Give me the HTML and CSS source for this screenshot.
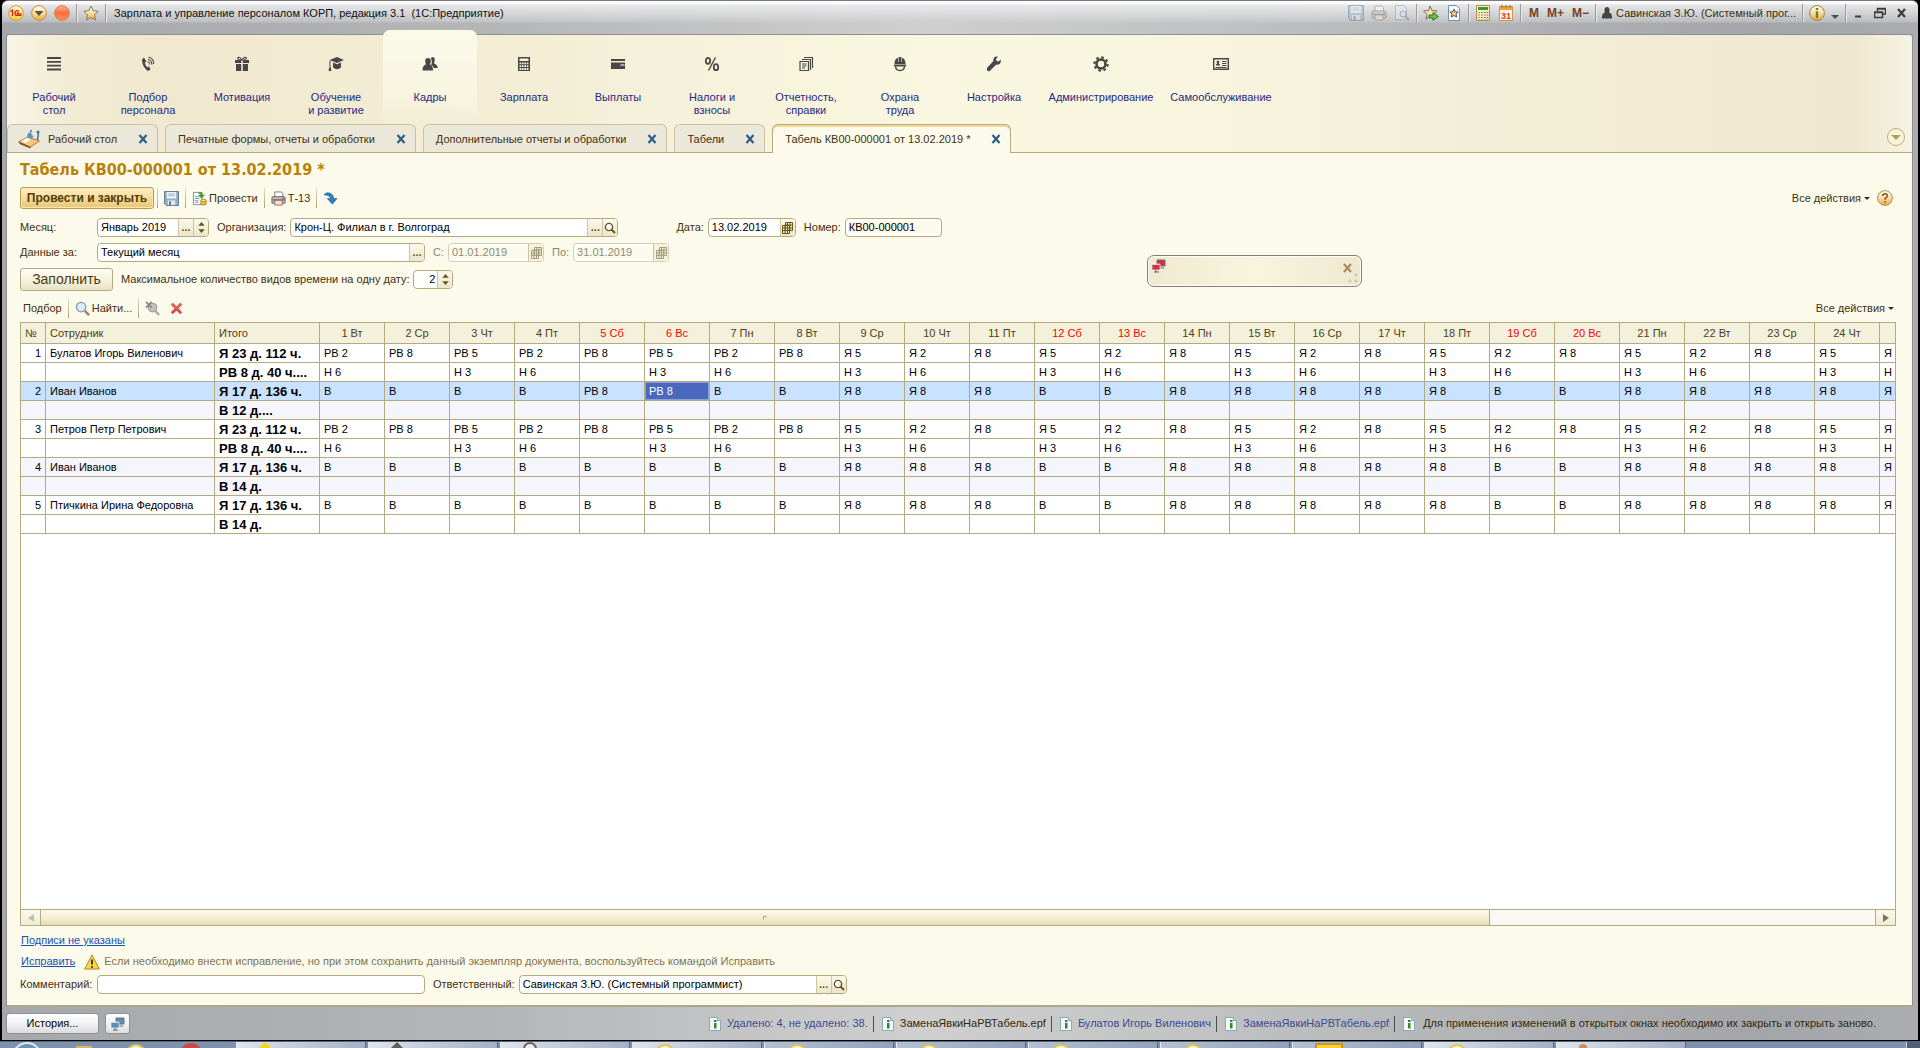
FILE: index.html
```html
<!DOCTYPE html>
<html lang="ru">
<head>
<meta charset="utf-8">
<title>Зарплата и управление персоналом КОРП, редакция 3.1</title>
<link rel="stylesheet" href="styles.css">
</head>
<body>
<svg class="defs" aria-hidden="true">
  <defs>
    <linearGradient id="g-orange" x2="0" y2="1"><stop offset="0" stop-color="#fffdf2"/><stop offset=".45" stop-color="#fbe3ae"/><stop offset="1" stop-color="#f0a63c"/></linearGradient>
    <linearGradient id="g-yellow" x2="0" y2="1"><stop offset="0" stop-color="#fffbd8"/><stop offset="1" stop-color="#f8d22c"/></linearGradient>
    <linearGradient id="g-red" x2="0" y2="1"><stop offset="0" stop-color="#ffb595"/><stop offset=".5" stop-color="#fb6a3f"/><stop offset="1" stop-color="#ff9a5c"/></linearGradient>
  </defs>
  <symbol id="i-close" viewBox="0 0 10 10"><path d="M1.500 1l7 8M8.500 1l-7 8" stroke="currentColor" stroke-width="2.200"/></symbol>
  <symbol id="i-lens" viewBox="0 0 12 12"><circle cx="5" cy="5" r="3.600" fill="#fff" stroke="#6b5413" stroke-width="1.400"/><path d="M7.500 7.500L11 11" stroke="#6b5413" stroke-width="2"/></symbol>
  <symbol id="i-cal" viewBox="0 0 11 12"><path d="M3.500.5h7v8h-7z" fill="#f7f3d8" stroke="currentColor"/><path d="M.5 3.500h7v8h-7zM.5 6h9.500M.5 8.500h9M3 2.500v9M5.500 1v10.500M8 1v8M3.500 3h7" fill="none" stroke="currentColor"/></symbol>
  <symbol id="i-spin" viewBox="0 0 7 12"><path d="M3.500 0L7 4H0zM3.500 12L0 8h7z" fill="currentColor"/></symbol>
  <symbol id="i-save" viewBox="0 0 16 16"><path d="M.5.5h15v15h-13l-2-2z" fill="#8fb0c6" stroke="#56748b"/><path d="M3 1h10v7H3z" fill="#eef4f8"/><path d="M4.500 3h7M4.500 5h7" stroke="#9db2c0"/><path d="M4 10h8v5H4z" fill="#dfe7ec"/><path d="M5.500 11h2v4h-2z" fill="#56748b"/></symbol>
  <symbol id="i-print" viewBox="0 0 16 16"><path d="M4 1h7l1.500 1.500V7H4z" fill="#fff" stroke="#777"/><path d="M1 7q0-1 1-1h12q1 0 1 1v6H1z" fill="#bdbdbd" stroke="#666"/><path d="M1.500 9.500h13" stroke="#555"/><path d="M4 10h8v5H4z" fill="#f3e2da" stroke="#a06a5a"/><circle cx="13" cy="8" r=".8" fill="#d22"/></symbol>
  <symbol id="i-mon" viewBox="0 0 15 14"><path d="M6 1h8v6H6z" fill="currentColor" stroke="#66717c"/><path d="M8 9h5" stroke="#66717c"/><path d="M1 5h8v6H1z" fill="currentColor" stroke="#fff" stroke-width=".6"/><path d="M1 5.500h8" stroke="#cfd8df"/><path d="M3 13h5M5 11v2" stroke="#59636d"/></symbol>
  <symbol id="i-info" viewBox="0 0 12 14"><path d="M.5.5h8l3 3v10H.5z" fill="#f4f9fd" stroke="#8ea6b8"/><path d="M8.500.5v3h3" fill="#c9d9e4" stroke="#8ea6b8"/><path d="M5 3h2.500v2H5zM5 6h2.500v5.500H5z" fill="#2f8a22"/></symbol>
</svg>

<div class="window">
  <header class="titlebar">
    <div class="title-left">
      <button class="orb" aria-label="1С"><svg viewBox="0 0 16 16"><circle cx="8" cy="8" r="7.300" fill="url(#g-yellow)" stroke="#d6993d"/><path d="M2.500 6.500L4.500 5v6M11 6.200Q9 4.800 7.500 6.500T8 10.300h5.500M10.500 7.800Q9 7.500 9.300 8.800H13.500" fill="none" stroke="#d8261c" stroke-width="1.300"/></svg></button>
      <button class="orb" aria-label="Главное меню"><svg viewBox="0 0 16 16"><circle cx="8" cy="8" r="7.300" fill="url(#g-orange)" stroke="#c98a35"/><path d="M3.500 6h9L8 11z" fill="#5b5349"/></svg></button>
      <button class="orb" aria-label="Сеанс"><svg viewBox="0 0 16 16"><circle cx="8" cy="8" r="7.300" fill="url(#g-red)" stroke="#d9793a"/></svg></button>
      <i class="vsep"></i>
      <button class="orb" aria-label="Избранное"><svg viewBox="0 0 16 16"><path d="M8 1l2.200 4.700 5 .6-3.700 3.500 1 5.200L8 12.500 3.500 15l1-5.200L.8 6.300l5-.6z" fill="url(#g-orange)" stroke="#8b7a5a"/></svg></button>
      <i class="vsep"></i>
      <span class="app-title">Зарплата и управление персоналом КОРП, редакция 3.1 &nbsp;(1С:Предприятие)</span>
    </div>
    <div class="title-right">
      <span class="tgroup faded">
        <button class="tb" aria-label="Сохранить"><svg><use href="#i-save"/></svg></button>
        <button class="tb" aria-label="Печать"><svg><use href="#i-print"/></svg></button>
        <button class="tb" aria-label="Просмотр"><svg viewBox="0 0 16 16"><path d="M1.500.5h8l3 3v11h-11z" fill="#e8eef4" stroke="#8295a8"/><circle cx="9" cy="9" r="3" fill="#dce9f5" stroke="#5f7890"/><path d="M11 11l4 4" stroke="#a06a5a" stroke-width="2"/></svg></button>
      </span>
      <i class="vsep"></i>
      <span class="tgroup">
        <button class="tb" aria-label="В избранное"><svg viewBox="0 0 16 16"><path d="M7 1l2 4.500 5 .5-3.800 3.500L11 14l-4-2.500L3 14l1-4.500L.5 6l5-.5z" fill="#f7e3a8" stroke="#77705c"/><path d="M6 10h4V7.500l5.500 4-5.500 4V13H6z" fill="#69c043" stroke="#2d7a1c"/></svg></button>
        <button class="tb" aria-label="Ссылка"><svg viewBox="0 0 16 16"><path d="M2.500.5h8l3 3v12h-11z" fill="#f7fafd" stroke="#6f93b0"/><path d="M8 4l1.200 2.800 3 .2-2.200 2 .7 3L8 10.500 5.300 12 6 9 3.800 7l3-.2z" fill="#f6cf7d" stroke="#555"/></svg></button>
      </span>
      <i class="vsep"></i>
      <span class="tgroup">
        <button class="tb" aria-label="Калькулятор"><svg viewBox="0 0 16 16"><path d="M1.500.5h13v15h-13z" fill="#f7eecb" stroke="#b58d4c"/><path d="M3 2h10v3H3z" fill="#3c9a2a"/><path d="M4 7v8M7 7v8M10 7v8" stroke="#7b6a43" stroke-width="1.500" stroke-dasharray="1 1.500"/><path d="M12.500 7v8" stroke="#d33" stroke-width="1.500" stroke-dasharray="1 1.500"/></svg></button>
        <button class="tb" aria-label="Календарь"><svg viewBox="0 0 16 16"><path d="M1.500 1.500h13v14h-13z" fill="#fdf4e2" stroke="#c8954e"/><path d="M2 2h12v3H2z" fill="#eea53e"/><path d="M4 0v3M8 0v3M12 0v3" stroke="#9b6a2a"/><text x="8" y="14" text-anchor="middle" class="cal-num">31</text></svg></button>
      </span>
      <i class="vsep"></i>
      <span class="tgroup mem"><button>M</button><button>M+</button><button>M−</button></span>
      <i class="vsep"></i>
      <button class="user"><svg viewBox="0 0 10 12"><path d="M5 0a2.800 3.200 0 0 1 2 5.300Q9.800 6.500 10 9v2.500H0V9q.2-2.500 3-3.700A2.800 3.200 0 0 1 5 0z" fill="#45443f"/></svg>Савинская З.Ю. (Системный прог...</button>
      <i class="vsep"></i>
      <button class="orb" aria-label="Информация"><svg viewBox="0 0 16 16"><circle cx="8" cy="8" r="7.400" fill="url(#g-orange)" stroke="#9a7e52"/><path d="M6.800 3h2.400v2H6.800zM6.800 6.300h2.400V13H6.800z" fill="#5d8a24"/></svg></button>
      <i class="caret low"></i>
      <i class="vsep"></i>
      <span class="winbtns">
        <button aria-label="Свернуть"><svg viewBox="0 0 12 12"><path d="M3 9.500h6" stroke="#3d3d3f" stroke-width="2"/></svg></button>
        <button aria-label="Восстановить"><svg viewBox="0 0 12 12"><path d="M3.500 4V1.500h8V7H9M.5 5h8v5.500h-8zM.5 5.500h8M3.500 2h8" fill="none" stroke="#3d3d3f" stroke-width="1.500"/></svg></button>
        <button aria-label="Закрыть"><svg class="win-x"><use href="#i-close"/></svg></button>
      </span>
    </div>
  </header>

  <div class="panel">
    <nav class="sections" aria-label="Разделы">
      <a href="#" class="section"><svg viewBox="0 0 16 16"><path d="M1 2h14M1 5.800h14M1 9.600h14M1 13.500h14" stroke="#474747" stroke-width="1.800"/></svg><span>Рабочий<br>стол</span></a>
      <a href="#" class="section"><svg viewBox="0 0 16 16"><path d="M4 1.500L2 3.500Q2 10 7.500 15l3-1.200-1.300-3.300-2.200.7Q5 8.500 4.800 6.500l1.500-1z" fill="#474747"/><path d="M7.500 5.500q2 .5 2.300 3M8 3.300q3.500.7 4 5.200M8.500 1q5 1 5.300 7" fill="none" stroke="#474747" stroke-width="1.100"/></svg><span>Подбор<br>персонала</span></a>
      <a href="#" class="section"><svg viewBox="0 0 16 16"><path d="M1 4h6.200v3H1zM8.800 4H15v3H8.800zM2 8h5.200v7H2zM8.800 8H14v7H8.800z" fill="#474747"/><path d="M7.500 4Q3 4 4 1.500q2-1 3.500 2.500Q10 .5 12 1.500q1 2.500-3.500 2.500" fill="none" stroke="#474747" stroke-width="1.200"/></svg><span>Мотивация</span></a>
      <a href="#" class="section"><svg viewBox="0 0 16 16"><path d="M9 1L1.500 4 9 7l7-3zM5 6.500v5q4 3.500 8 0v-5L9 8.200z" fill="#474747"/><path d="M2 4.500v7" stroke="#474747"/><path d="M1 11.500h2l.3 3.500H.7z" fill="#474747"/></svg><span>Обучение<br>и развитие</span></a>
      <a href="#" class="section current"><svg viewBox="0 0 16 16"><path d="M10 1q3 0 2.800 3L12 7.500q3.700 1 3.700 4.500h-4Q11 9.500 9.200 8.800 10.500 6.500 9 2z" fill="#474747"/><path d="M6 2q3 0 2.800 3.200Q8.700 7 7.800 8.300 11 9.200 11 14.500H.5Q.5 9.200 4.200 8.300 3.300 7 3.200 5.200 3 2 6 2z" fill="#474747"/></svg><span>Кадры</span></a>
      <a href="#" class="section"><svg viewBox="0 0 16 16"><path d="M2 1h12v14H2z" fill="#474747"/><path d="M3.500 2.500h9V5h-9z" fill="#f5f0da"/><path d="M3.500 7.300h9M3.500 10.200h9M3.500 13h9" stroke="#f5f0da" stroke-width="1.800" stroke-dasharray="1.700 .7"/></svg><span>Зарплата</span></a>
      <a href="#" class="section"><svg viewBox="0 0 16 16"><path d="M1 3h14v2H1zM1 6.500h14V13H1z" fill="#474747"/><path d="M10.500 9h4" stroke="#f5f0da" stroke-width="1.200"/></svg><span>Выплаты</span></a>
      <a href="#" class="section"><svg viewBox="0 0 16 16"><ellipse cx="4" cy="4.800" rx="2.200" ry="3" fill="none" stroke="#474747" stroke-width="1.800"/><ellipse cx="12" cy="11.200" rx="2.200" ry="3" fill="none" stroke="#474747" stroke-width="1.800"/><path d="M11.500 1.500l-7 13" stroke="#474747" stroke-width="1.400"/></svg><span>Налоги и<br>взносы</span></a>
      <a href="#" class="section"><svg viewBox="0 0 16 16"><path d="M6 1.500h8.500V12M4 3.500h8.500V14M2 5.500h8.500v9H2zM4 8h4.500M4 10h4.500M4 12h3" fill="none" stroke="#474747" stroke-width="1.200"/></svg><span>Отчетность,<br>справки</span></a>
      <a href="#" class="section"><svg viewBox="0 0 16 16"><path d="M2.500 8Q2.500 2.500 6 2v4h.6V1h2.800v5h.6V2q3.500.5 3.500 6zM2 8.500h12v2H2z" fill="#474747"/><path d="M3.500 10.500q.5 4 4.500 4t4.500-4" fill="none" stroke="#474747" stroke-width="1.500"/></svg><span>Охрана<br>труда</span></a>
      <a href="#" class="section"><svg viewBox="0 0 16 16"><path d="M14.800 3.500l-2.300 2-2-.5-.5-2 2-2.300Q7 0 7.200 5.300L1 12v2.500l1.500.8h1L10 8.700q5.500.3 4.800-5.200z" fill="#474747"/></svg><span>Настройка</span></a>
      <a href="#" class="section wide"><svg viewBox="0 0 16 16"><circle cx="8" cy="8" r="4.500" fill="none" stroke="#474747" stroke-width="2.600"/><circle cx="8" cy="8" r="6.600" fill="none" stroke="#474747" stroke-width="2.200" stroke-dasharray="2.600 2.580"/></svg><span>Администрирование</span></a>
      <a href="#" class="section wide"><svg viewBox="0 0 16 16"><path d="M.7 2.700h14.600v10.600H.7z" fill="none" stroke="#474747" stroke-width="1.400"/><path d="M5 4.500q1.500 0 1.300 2l-.5 1.300q1.400.3 1.400 1.700H2.800q0-1.400 1.400-1.700l-.5-1.300Q3.500 4.500 5 4.500z" fill="#474747"/><path d="M9 5.500h4.500M9 7.500h4.500M9 9.500h4.500M2.500 11.500h11" stroke="#474747"/></svg><span>Самообслуживание</span></a>
    </nav>

    <div class="tabs">
      <div class="tab"><svg class="desk" viewBox="0 0 24 20"><path d="M1 13l9-5 12 4-9 6z" fill="#f3c77d" stroke="#b57a37"/><path d="M13 18v1.500L2 15v-2z" fill="#7d4c26"/><path d="M4 12l5-3 4 2-5 3z" fill="#fff"/><path d="M10 8q-1-4 3-5l3 5q-2 2-6 0z" fill="#4c9bc4"/><path d="M13 3l1-2M20 11l1-8" stroke="#3b6f90" stroke-width="1.500"/><circle cx="20.500" cy="3" r="1.500" fill="#2f7bab"/></svg><a href="#">Рабочий стол</a><button aria-label="Закрыть"><svg><use href="#i-close"/></svg></button></div>
      <div class="tab"><a href="#">Печатные формы, отчеты и обработки</a><button aria-label="Закрыть"><svg><use href="#i-close"/></svg></button></div>
      <div class="tab"><a href="#">Дополнительные отчеты и обработки</a><button aria-label="Закрыть"><svg><use href="#i-close"/></svg></button></div>
      <div class="tab"><a href="#">Табели</a><button aria-label="Закрыть"><svg><use href="#i-close"/></svg></button></div>
      <div class="tab active"><a href="#">Табель КВ00-000001 от 13.02.2019 *</a><button aria-label="Закрыть"><svg><use href="#i-close"/></svg></button></div>
      <button class="collapse" aria-label="Список окон"><i class="caret"></i></button>
    </div>

    <main class="page">
      <h1>Табель КВ00-000001 от 13.02.2019 *</h1>

      <div class="toolbar">
        <button class="primary">Провести и закрыть</button>
        <i class="sep"></i>
        <button class="tool" aria-label="Записать"><svg><use href="#i-save"/></svg></button>
        <i class="sep"></i>
        <button class="tool"><svg viewBox="0 0 16 16"><path d="M1.500 1.500h9v13h-9z" fill="#fff" stroke="#6f8fa8"/><path d="M3 6h5M3 8h5M3 10h4M3 12h4" stroke="#7794aa"/><path d="M6 1.500h5V4h3l-4 4-3.500-4H9" fill="#3aa02d"/><path d="M9.500 10v4q2.500 2 5.500 0v-4z" fill="#f0c33b" stroke="#b98517"/><ellipse cx="12.200" cy="10" rx="2.800" ry="1.300" fill="#ffe88a" stroke="#b98517"/></svg>Провести</button>
        <i class="sep"></i>
        <button class="tool"><svg><use href="#i-print"/></svg>Т-13</button>
        <i class="sep"></i>
        <button class="tool" aria-label="Перейти"><svg viewBox="0 0 16 16"><path d="M1 4Q3 1 7 2q4 1 4.500 6H15l-5 6-5.500-6H8Q7.500 4.500 1 4z" fill="#2f7fc0" stroke="#1d5d96" stroke-width=".6"/></svg></button>
        <span class="spacer"></span>
        <button class="tool menu">Все действия<i class="caret"></i></button>
        <button class="orb help" aria-label="Справка"><svg viewBox="0 0 16 16"><circle cx="8" cy="8" r="7.400" fill="url(#g-orange)" stroke="#b08c57"/><path d="M5.600 6q.2-2.200 2.400-2.200t2.400 2q0 1.500-2.300 2.700v1.300M8 11v1.500" fill="none" stroke="#7a5a20" stroke-width="1.500"/></svg></button>
      </div>

      <div class="row">
        <label class="first" for="month">Месяц:</label>
        <span class="field w-month"><input id="month" value="Январь 2019"><button aria-label="Выбрать" class="dots">...</button><button aria-label="Изменить месяц"><svg class="spin"><use href="#i-spin"/></svg></button></span>
        <label for="org">Организация:</label>
        <span class="field w-long"><input id="org" value="Крон-Ц. Филиал в г. Волгоград"><button aria-label="Выбрать" class="dots">...</button><button aria-label="Открыть"><svg class="lens"><use href="#i-lens"/></svg></button></span>
        <label class="far" for="date">Дата:</label>
        <span class="field w-date"><input id="date" value="13.02.2019"><button aria-label="Календарь"><svg class="cal"><use href="#i-cal"/></svg></button></span>
        <label for="num">Номер:</label>
        <span class="field w-num shaded"><input id="num" value="КВ00-000001"></span>
      </div>

      <div class="row">
        <label class="first" for="src">Данные за:</label>
        <span class="field w-long"><input id="src" value="Текущий месяц"><button aria-label="Выбрать" class="dots">...</button></span>
        <label class="off" for="from">С:</label>
        <span class="field w-range disabled"><input id="from" value="01.01.2019" disabled><button aria-label="Календарь" disabled><svg class="cal"><use href="#i-cal"/></svg></button></span>
        <label class="off" for="to">По:</label>
        <span class="field w-range disabled"><input id="to" value="31.01.2019" disabled><button aria-label="Календарь" disabled><svg class="cal"><use href="#i-cal"/></svg></button></span>
      </div>

      <div class="row">
        <button class="fill">Заполнить</button>
        <label for="max">Максимальное количество видов времени на одну дату:</label>
        <span class="field w-small"><input id="max" value="2"><button aria-label="Изменить"><svg class="spin"><use href="#i-spin"/></svg></button></span>
      </div>

      <div class="toolbar">
        <button class="tool">Подбор</button>
        <i class="sep"></i>
        <button class="tool"><svg viewBox="0 0 16 16"><circle cx="6.500" cy="6.500" r="5" fill="#dcecf8" stroke="#8a97a8" stroke-width="1.400"/><path d="M10.500 10.500L15 15" stroke="#b07a5a" stroke-width="2.600"/></svg>Найти...</button>
        <i class="sep"></i>
        <button class="tool" aria-label="Отменить поиск"><svg viewBox="0 0 16 16"><circle cx="8" cy="7" r="4.500" fill="#c5c0bd" stroke="#a5a09e" stroke-width="1.400"/><path d="M11 10.500L15 15" stroke="#b0a8a2" stroke-width="2.600"/><path d="M1 1l6 6M7 1L1 7" stroke="#8f8b8b" stroke-width="2"/></svg></button>
        <button class="tool" aria-label="Удалить"><svg viewBox="0 0 16 16"><path d="M3 3l10 10M13 3L3 13" stroke="#dd4a45" stroke-width="3"/><path d="M3 3l5 5 5-5" fill="none" stroke="#f08a80"/></svg></button>
        <span class="spacer"></span>
        <button class="tool menu">Все действия<i class="caret"></i></button>
      </div>

      <div class="grid">
        <div class="grid-body">
          <table>
            <colgroup><col class="c-num"><col class="c-name"><col class="c-total"></colgroup>
            <thead><tr><th class="l">№</th><th class="l">Сотрудник</th><th class="l">Итого</th></tr></thead>
            <tbody></tbody>
          </table>
        </div>
        <div class="hscroll">
          <button aria-label="Влево" class="left-btn"><i class="arr left"></i></button>
          <div class="track"><div class="thumb"><i></i></div></div>
          <button aria-label="Вправо"><i class="arr right"></i></button>
        </div>
      </div>

      <div class="links">
        <p><a href="#">Подписи не указаны</a></p>
        <p><a href="#">Исправить</a><svg viewBox="0 0 16 16"><path d="M8 1l7.300 14H.7z" fill="#ffd83c" stroke="#a48a34"/><path d="M8 5.500v5M8 12v1.800" stroke="#2c2c2c" stroke-width="1.800"/></svg><span>Если необходимо внести исправление, но при этом сохранить данный экземпляр документа, воспользуйтесь командой Исправить</span></p>
      </div>
      <div class="row last">
        <label class="first" for="comment">Комментарий:</label>
        <span class="field w-long"><input id="comment" value=""></span>
        <label for="resp">Ответственный:</label>
        <span class="field w-long"><input id="resp" value="Савинская З.Ю. (Системный программист)"><button aria-label="Выбрать" class="dots">...</button><button aria-label="Открыть"><svg class="lens"><use href="#i-lens"/></svg></button></span>
      </div>
    </main>
  </div>

  <footer class="status">
    <button class="hist">История...</button>
    <button class="net" aria-label="Соединение"><svg><use href="#i-mon"/></svg></button>
    <span class="spacer"></span>
    <ul class="events">
      <li><svg><use href="#i-info"/></svg><a href="#">Удалено: 4, не удалено: 38.</a></li>
      <li><svg><use href="#i-info"/></svg><span>ЗаменаЯвкиНаРВТабель.epf</span></li>
      <li><svg><use href="#i-info"/></svg><a href="#">Булатов Игорь Виленович</a></li>
      <li><svg><use href="#i-info"/></svg><a href="#">ЗаменаЯвкиНаРВТабель.epf</a></li>
      <li><svg><use href="#i-info"/></svg><span>Для применения изменений в открытых окнах необходимо их закрыть и открыть заново.</span></li>
    </ul>
  </footer>

  <div class="toast" role="status"><svg class="toast-net"><use href="#i-mon"/></svg><button aria-label="Закрыть"><svg><use href="#i-close"/></svg></button><i class="grip"></i></div>
</div>

<div class="taskbar">
  <div class="pins"><i class="start"></i><i class="folder"></i><i class="ball"></i><i class="red"></i></div>
  <div class="task light"><i class="star"></i></div>
  <div class="task light"><i class="tri"></i></div>
  <div class="task light"><i class="ring"></i></div>
  <div class="task light"><i class="ball"></i></div>
  <div class="task"><i class="ball"></i></div>
  <div class="task"><i class="ball"></i></div>
  <div class="task"><i class="ball"></i></div>
  <div class="task"><i class="ball"></i></div>
  <div class="task"><i class="note"></i></div>
  <div class="task light"><i class="ball"></i></div>
  <div class="task light"><i class="brush"></i></div>
  <span class="spacer"></span>
  <div class="peek"></div>
</div>
<script src="timesheet.js"></script>
</body>
</html>
```
FILE: styles.css
```css
* { box-sizing: border-box; }
html, body { height: 100%; }
body {
  margin: 0;
  display: flex;
  flex-direction: column;
  overflow: hidden;
  background: #000;
  color: #3f3010;
  font: 11px/13px "Liberation Sans", Arial, sans-serif;
}
button {
  border: 0;
  padding: 0;
  margin: 0;
  background: none;
  font: inherit;
  color: inherit;
  display: flex;
  align-items: center;
  justify-content: center;
  white-space: nowrap;
}
svg { width: 16px; height: 16px; flex: none; fill: none; display: block; }
a { color: inherit; text-decoration: none; }
i { display: block; flex: none; }
.defs { position: absolute; width: 0; height: 0; }
.spacer { flex: 1; }
.caret { border: 3px solid transparent; border-top: 3px solid currentColor; border-bottom: 0; }
.caret.low { border-width: 4px 4px 0; color: #4d4d4d; margin-top: 8px; }

/* window frame */
.window {
  position: relative;
  flex: 1;
  min-height: 0;
  display: flex;
  flex-direction: column;
  margin: 0 2px 1px;
  padding: 0 5px 0 4px;
  border-top: 1px solid #7c7a7f;
  border-radius: 6px 6px 0 0;
  background: linear-gradient(90deg, #a6a7aa, #b4b5b7 25%, #cfcfcf 48%, #bfc0c1 65%, #a3a5a9 92%, #abacb0);
}
.titlebar {
  height: 33px;
  flex: none;
  margin: 0 -5px 0 -4px;
  padding: 0 11px 0 6px;
  display: flex;
  align-items: flex-start;
  justify-content: space-between;
  border-radius: 6px 6px 0 0;
  background: linear-gradient(#fff, #fff 2px, rgba(236, 237, 238, .9) 4px, rgba(206, 207, 208, .5) 21px, transparent 22px);
}
.title-left, .title-right { display: flex; align-items: center; height: 24px; }
.vsep { width: 1px; height: 18px; background: #9a9a9c; box-shadow: 1px 0 #e9e9e9; }
.title-left { gap: 7px; }
.title-left .vsep { margin: 0 -1px; }
.app-title { margin-left: 2px; color: #111; white-space: nowrap; }
.title-right { gap: 6px; }
.tgroup { display: flex; gap: 7px; }
.faded { opacity: .45; }
.cal-num { font: bold 9px "Liberation Sans", Arial, sans-serif; fill: #d8401f; }
.mem { color: #7b4021; font-weight: bold; font-size: 12px; gap: 8px; padding-left: 2px; }
.user { gap: 4px; }
.user svg { width: 10px; height: 12px; }
.winbtns { display: flex; gap: 10px; }
.winbtns svg { width: 12px; height: 12px; }
.winbtns .win-x { width: 11px; height: 10px; color: #3d3d3f; }

.panel {
  flex: 1;
  min-height: 0;
  display: flex;
  flex-direction: column;
  border: 1px solid #8e8f92;
  border-bottom: 2px solid #aea786;
  border-radius: 3px 3px 0 0;
  background: linear-gradient(90deg, #f7f5e4, #f2ecd4 3%, #f0e9cf 8%, #f4eed7 28%, #f9f7df 48%, #f9f6df 60%, #f5f1da 70%, #f2ecd4 85%, #efe8d0 97%, #f5f3e2);
}
.sections { display: flex; height: 89px; flex: none; }
.section {
  width: 94px;
  display: flex;
  flex-direction: column;
  align-items: center;
  padding-top: 21px;
  color: #1d2a86;
  text-align: center;
}
.section.wide { width: 120px; }
.section span { margin-top: 19px; }
.section.current {
  margin-top: -5px;
  padding-top: 26px;
  border-radius: 7px 7px 0 0;
  background: linear-gradient(#fbfaea, #f8f5df 70%, transparent);
  box-shadow: 0 -1px 0 #bdb9a4;
}

.tabs {
  display: flex;
  height: 29px;
  flex: none;
  gap: 7px;
  align-items: stretch;
  border-bottom: 1px solid #b4aa80;
}
.tab {
  display: flex;
  align-items: center;
  gap: 16px;
  padding: 0 9px 0 12px;
  border: 1px solid #c9c2a0;
  border-bottom: 0;
  border-radius: 6px 6px 0 0;
  background: #ebe8da;
  white-space: nowrap;
}
.tab a { padding-top: 1px; }
.tab svg { width: 10px; height: 10px; color: #2b5f88; }
.tab svg.desk { width: 25px; height: 20px; margin-right: -10px; }
.tab:first-child { padding-left: 9px; }
.tab button { margin-left: 5px; }
.tab.active {
  margin-bottom: -1px;
  border-color: #b4aa80;
  box-shadow: inset 0 2px #f3d795;
  background: #fcfaeb;
}
.collapse {
  margin: 4px 7px 0 auto;
  width: 18px;
  height: 18px;
  border: 1px solid #b9ae7c;
  border-radius: 50%;
  background: #faf4d8;
  color: #ada262;
}
.collapse .caret { border-width: 5px 5px 0; }

/* document form */
.page {
  flex: 1;
  min-height: 0;
  display: flex;
  flex-direction: column;
  padding: 8px 16px 11px 13px;
  background: #fcfaeb;
}
h1 {
  margin: 0 0 8px;
  font: bold 16px/18px "DejaVu Sans Condensed", "DejaVu Sans", sans-serif;
  color: #b88208;
}
.toolbar { display: flex; align-items: center; gap: 3px; height: 22px; flex: none; }
.sep { width: 1px; height: 20px; background: linear-gradient(#e4dfc4, #a99f78); }
.primary {
  width: 134px;
  height: 22px;
  border: 1px solid #c09a4c;
  border-radius: 3px;
  background: linear-gradient(#fdf0c8, #f3d691 60%, #e9c677);
  box-shadow: inset 0 0 0 1px #fae7b4;
  font-weight: bold;
  font-size: 12px;
  color: #513c05;
}
.tool { gap: 2px; margin: 0 3px; }
.tool svg { width: 15px; height: 15px; }
.menu { gap: 3px; }
.menu:last-child { margin-right: 2px; }
.help { margin: 0 3px 0 1px; }

.row { display: flex; align-items: center; flex: none; margin-bottom: 6px; }
.toolbar + .row { margin-top: 9px; }
.row label { margin: 0 4px 0 8px; white-space: nowrap; }
.row label.first { width: 77px; margin: 0; }
.row label.far { margin-left: 58px; }
.row label.off { color: #8d8468; }
.field {
  display: flex;
  height: 19px;
  border: 1px solid #b4aa80;
  border-radius: 4px;
  background: #fff;
  overflow: hidden;
}
.field input {
  flex: 1;
  min-width: 0;
  border: 0;
  outline: 0;
  margin: 0;
  padding: 0 0 0 3px;
  background: none;
  font: inherit;
  color: #000;
}
.field button { width: 15px; flex: none; border-left: 1px solid #cdc5a2; background: linear-gradient(#fbf9ec, #ebe6cb); color: #6b5413; }
.field .dots { font-weight: bold; align-items: flex-end; padding-bottom: 2px; }
.spin { width: 7px; height: 11px; }
.cal { width: 11px; height: 12px; }
.lens { width: 12px; height: 12px; }
.w-month { width: 112px; }
.w-long { width: 328px; }
.w-date { width: 88px; }
.w-num { width: 97px; }
.w-range { width: 96px; }
.w-small { width: 40px; }
.w-small input { text-align: right; padding-right: 2px; }
.shaded, .disabled { background: #fcfaeb; box-shadow: inset 0 0 0 2px #fff; }
.disabled { border-color: #d5cfb2; }
.disabled input { color: #8b8b80; }
.disabled button { color: #a49d80; background: #f6f2dc; }
.fill {
  width: 93px;
  height: 23px;
  border: 1px solid #b4aa80;
  border-radius: 3px;
  background: linear-gradient(#fefdf5, #f3efd9 60%, #e8e2c6);
  font-size: 14px;
  color: #4a3a10;
}

/* timesheet grid */
.grid {
  flex: 1;
  min-height: 0;
  display: flex;
  flex-direction: column;
  margin-top: 3px;
  border: 1px solid #b4aa80;
  background: #fff;
}
.grid-body { flex: 1; min-height: 0; overflow: hidden; }
table { width: max-content; table-layout: fixed; border-collapse: separate; border-spacing: 0; }
.c-num { width: 25px; }
.c-name { width: 169px; }
.c-total { width: 105px; }
.c-day { width: 65px; }
th, td {
  height: 19px;
  padding: 1px 0 0 4px;
  border: solid #b4aa80;
  border-width: 0 1px 1px 0;
  font-weight: normal;
  text-align: left;
  white-space: nowrap;
  overflow: hidden;
  color: #000;
}
th { height: 21px; padding: 0; text-align: center; background: #f3f1dc; color: #4d3f18; }
th.l { text-align: left; padding-left: 4px; }
th.off { color: #f00; }
td.n { text-align: right; padding: 1px 4px 0 0; }
td.total { font-weight: bold; font-size: 13px; }
.alt td { background: #f5f6fd; }
.cur td { background: #c9e2ff; }
.cur td.sel { background: #4a68bd; color: #fff; box-shadow: inset 0 0 0 1px #8c9fd6; }
.hscroll { display: flex; height: 16px; flex: none; border-top: 1px solid #b4aa80; }
.hscroll button { width: 20px; border-left: 1px solid #b4aa80; background: linear-gradient(#fbf9ec, #efebd4); }
.hscroll .left-btn { border-left: 0; border-right: 1px solid #b4aa80; }
.track { flex: 1; background: #faf8f2; }
.thumb {
  width: 79%;
  height: 100%;
  display: flex;
  align-items: center;
  justify-content: center;
  border-right: 1px solid #b4aa80;
  background: linear-gradient(#fbf9ef, #f1ecce 60%, #e3dcb5);
}
.thumb i { width: 4px; height: 4px; border: solid #a9a387; border-width: 1px 0 0 1px; border-radius: 1px; }
.arr { border: 4px solid transparent; }
.arr.left { border-left: 0; border-right: 6px solid #c5bfa8; }
.arr.right { border-right: 0; border-left: 6px solid #77736b; }

.links p { display: flex; align-items: center; height: 21px; margin: 0; }
.links { padding: 4px 0 3px 1px; flex: none; }
.links a { color: #1b50b4; text-decoration: underline; }
.links svg { margin: 0 4px 0 9px; }
.links span { color: #7d7454; }
.row.last { margin-bottom: 0; }

/* information bar */
.status { display: flex; align-items: center; height: 33px; flex: none; }
.hist, .net {
  height: 21px;
  border: 1px solid #8f9092;
  border-radius: 3px;
  background: linear-gradient(#fff, #f2f2f2 50%, #dcdcdd);
  color: #000;
}
.hist { width: 93px; }
.net { width: 25px; margin-left: 6px; }
.net svg { color: #5b8fb8; height: 14px; width: 15px; }
.events { display: flex; list-style: none; margin: 0; padding: 0 37px 0 0; }
.events li { display: flex; align-items: center; height: 16px; white-space: nowrap; }
.events li + li { margin-left: 5px; border-left: 1px solid #4f4f50; padding-left: 8px; }
.events li:last-child svg { margin-right: 8px; }
.events svg { width: 12px; height: 14px; margin-right: 6px; }
.events a { color: #3b4a94; }
.events span { color: #33290c; }

.toast {
  position: absolute;
  left: 1145px;
  top: 254px;
  width: 215px;
  height: 32px;
  border: 1px solid #83807c;
  border-radius: 7px;
  display: flex;
  justify-content: space-between;
  align-items: flex-start;
  padding: 3px 8px 3px 3px;
  box-shadow: inset 0 0 0 1px #fffef8;
  background: linear-gradient(90deg, #f0e9cf, #f8f5df 50%, #efe8d0);
}
.toast-net { width: 15px; height: 14px; color: #d92f3c; }
.toast button { margin-top: 4px; }
.toast button svg { width: 11px; height: 10px; color: #a98a58; }
.grip { position: absolute; right: 3px; bottom: 3px; width: 10px; height: 10px; background: radial-gradient(circle at 2px 8px, #cfc8b0 1px, transparent 2px), radial-gradient(circle at 8px 8px, #cfc8b0 1px, transparent 2px), radial-gradient(circle at 8px 2px, #cfc8b0 1px, transparent 2px); }

/* system taskbar, only its top edge is on screen */
.taskbar { display: flex; height: 7px; flex: none; overflow: hidden; background: #7e92ad; gap: 2px; border-top: 1px solid #55657d; }
.pins { width: 234px; display: flex; align-items: flex-start; gap: 34px; padding-left: 12px; }
.task { width: 130px; display: flex; align-items: flex-start; padding-left: 22px; background: linear-gradient(90deg, #b4c0d3, #92a2bb); border-left: 1px solid #e2e8f0; border-right: 1px solid #5c6a80; }
.task.light { background: linear-gradient(90deg, #dfe4ec, #a3b0c6); }
.start { width: 30px; height: 30px; border-radius: 50%; background: #6d93b6; border: 2px solid #dbe8f2; }
.folder { width: 16px; height: 6px; margin-top: 4px; background: #d8b968; }
.ball { width: 20px; height: 20px; border-radius: 50%; background: #fdf7c0; border: 2px solid #dfc658; margin-top: 2px; }
.red { width: 22px; height: 22px; border-radius: 50%; background: #cf4742; margin-top: 1px; }
.star { border: 6px solid transparent; border-bottom-color: #f5d50c; border-top: 0; }
.tri { border: 6px solid transparent; border-bottom-color: #5d5f63; border-top: 0; }
.ring { width: 14px; height: 14px; border: 2px solid #666; border-radius: 50%; background: #eee; }
.note { width: 28px; height: 12px; margin-top: 1px; background: #f5d23a; border: 2px solid #c59c13; }
.brush { width: 8px; height: 8px; margin-top: 2px; border-radius: 50%; background: #d08a56; }
.peek { width: 14px; background: #4f5f77; border-left: 1px solid #c9d3e0; }
```
FILE: timesheet.js
```js
const WEEKDAYS = ["Вт", "Ср", "Чт", "Пт", "Сб", "Вс", "Пн"];
const DAYS = Array.from({ length: 25 }, (_, i) => i + 1);
// The month opens on a Tuesday.
const weekday = d => WEEKDAYS[(d - 1) % 7];

const shift = DAYS.map(d => (d < 9 ? "РВ " + [2, 8, 5][(d - 1) % 3] : "Я " + [5, 2, 8][d % 3]));
const night = DAYS.map(d => (d % 3 === 1 ? "Н 6" : d % 3 === 0 ? "Н 3" : ""));
const OFF_DAYS = [1, 2, 3, 4, 5, 6, 7, 8, 12, 13, 19, 20];
const office = DAYS.map(d => (OFF_DAYS.includes(d) ? "В" : "Я 8"));
const edited = office.map((v, i) => (i === 4 || i === 5 ? "РВ 8" : v));
const empty = DAYS.map(() => "");

const ROWS = [
  { name: "Булатов Игорь Виленович", lines: [["Я 23 д. 112 ч.", shift], ["РВ 8 д. 40 ч....", night]] },
  { name: "Иван Иванов", alt: true, current: 5, lines: [["Я 17 д. 136 ч.", edited], ["В 12 д....", empty]] },
  { name: "Петров Петр Петрович", lines: [["Я 23 д. 112 ч.", shift], ["РВ 8 д. 40 ч....", night]] },
  { name: "Иван Иванов", alt: true, lines: [["Я 17 д. 136 ч.", office], ["В 14 д.", empty]] },
  { name: "Птичкина Ирина Федоровна", lines: [["Я 17 д. 136 ч.", office], ["В 14 д.", empty]] }
];

function cell(tag, text, className) {
  const el = document.createElement(tag);
  el.textContent = text;
  if (className) el.className = className;
  return el;
}

const cols = document.querySelector("colgroup");
const head = document.querySelector("thead tr");
DAYS.forEach(d => {
  cols.append(cell("col", "", "c-day"));
  head.append(cell("th", d + " " + weekday(d), ["Сб", "Вс"].includes(weekday(d)) ? "off" : ""));
});

const body = document.querySelector("tbody");
ROWS.forEach((row, r) => row.lines.forEach(([total, values], line) => {
  const tr = document.createElement("tr");
  if (row.alt) tr.className = "alt";
  const current = row.current !== undefined && line === 0;
  if (current) tr.className = "cur";
  tr.append(cell("td", line ? "" : r + 1, "n"), cell("td", line ? "" : row.name), cell("td", total, "total"));
  values.forEach((v, i) => tr.append(cell("td", v, current && i === row.current ? "sel" : "")));
  body.append(tr);
}));
```
